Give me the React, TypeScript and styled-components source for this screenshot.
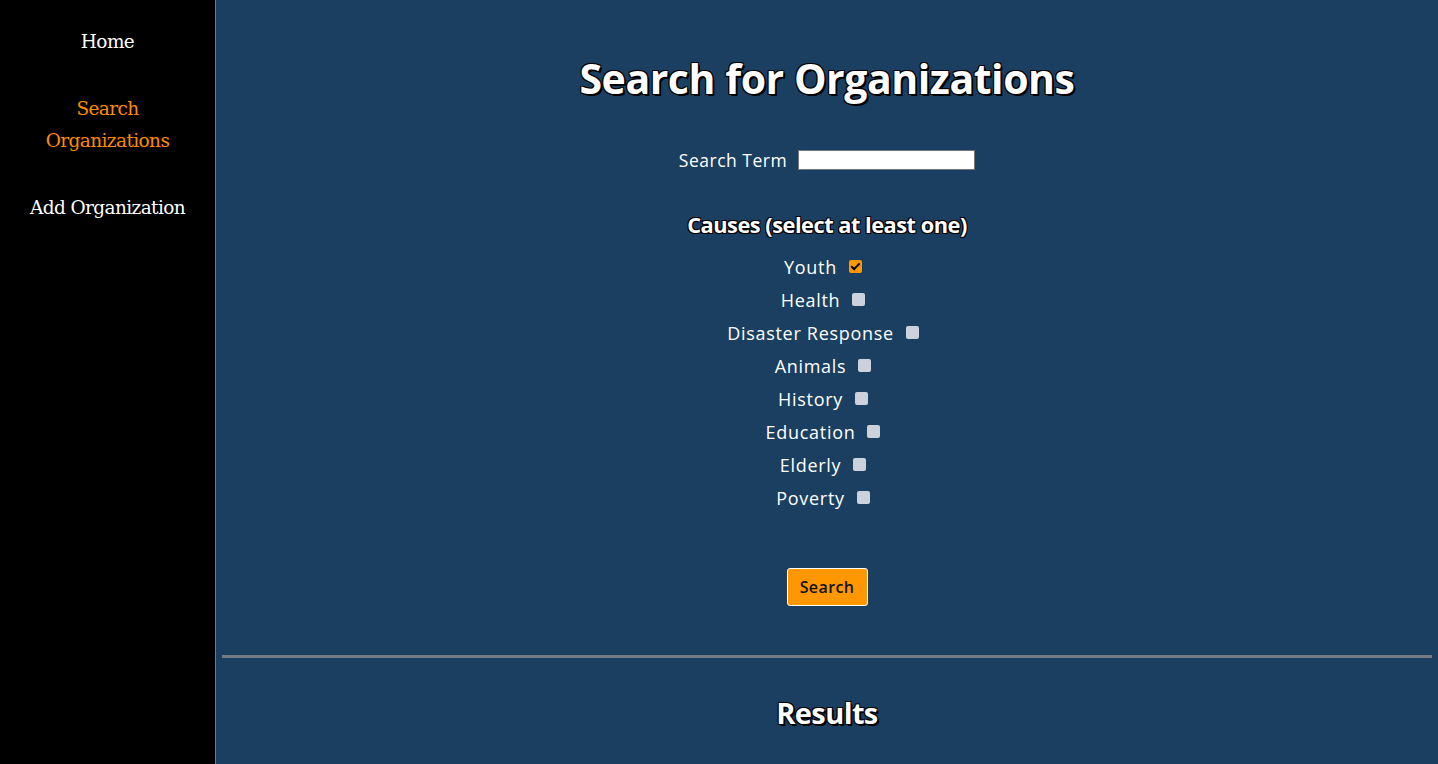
import React, { useState } from "react";
import styled, { createGlobalStyle } from "styled-components";

const Global = createGlobalStyle`
  html, body { margin: 0; padding: 0; background: #1b3f60; }
  #root { min-height: 100vh; }
`;

const Page = styled.div`
  display: flex;
  min-height: 764px;
`;

const Sidebar = styled.nav`
  width: 215px;
  flex: 0 0 215px;
  background: #000;
  border-right: 1px solid #6f7780;
  display: flex;
  flex-direction: column;
  align-items: center;
  padding-top: 26px;
  gap: 35px;
  font-family: "DejaVu Serif", "Liberation Serif", serif;
`;

const NavLink = styled.a<{ $active?: boolean }>`
  display: block;
  text-align: center;
  color: ${(p) => (p.$active ? "#ff8a00" : "#ffffff")};
  font-size: 18.5px;
  line-height: 32px;
  letter-spacing: -0.6px;
  text-decoration: none;
  padding: 0 20px;
`;

const Main = styled.main`
  flex: 1;
  background: #1b3f60;
  display: flex;
  flex-direction: column;
  align-items: center;
  padding: 54px 6px 0;
  font-family: "Open Sans", Lato, sans-serif;
  color: #fff;
`;

const Title = styled.h1`
  margin: 0;
  font-family: "Open Sans", Lato, sans-serif;
  font-weight: 700;
  font-size: 41px;
  line-height: 48px;
  letter-spacing: -0.45px;
  color: #fff;
  text-shadow: 2px 2px 0 #000, -1px -1px 0 #000, 1px -1px 0 #000, -1px 1px 0 #000,
    1px 1px 0 #000;
`;

const SearchRow = styled.div`
  margin-top: 46px;
  display: flex;
  align-items: center;
  gap: 11px;
  height: 24px;
  font-size: 17.5px;
  letter-spacing: 0.5px;
`;

const TextInput = styled.input`
  width: 177px;
  height: 20px;
  box-sizing: border-box;
  border: 1px solid #767676;
  background: #fff;
  padding: 0 3px;
  margin: 0;
`;

const Causes = styled.h2`
  margin: 39px 0 0;
  font-family: "Open Sans", Lato, sans-serif;
  font-weight: 700;
  font-size: 21.8px;
  line-height: 28px;
  letter-spacing: -0.5px;
  text-shadow: 1px 1px 0 #000, -1px -1px 0 #000, 1px -1px 0 #000, -1px 1px 0 #000;
`;

const CauseList = styled.div`
  margin-top: 11px;
  display: flex;
  flex-direction: column;
  align-items: center;
`;

const CauseRow = styled.label`
  display: flex;
  align-items: center;
  gap: 12px;
  height: 33px;
  font-size: 18px;
  letter-spacing: 0.7px;
  cursor: pointer;
`;

const Check = styled.input`
  appearance: none;
  -webkit-appearance: none;
  width: 13px;
  height: 13px;
  margin: 0 8px 0 0;
  border-radius: 2px;
  background: #cbd2dc;
  position: relative;
  cursor: pointer;
  &:checked {
    background: #ff9800;
  }
  &:checked::after {
    content: "";
    position: absolute;
    left: 4px;
    top: 1px;
    width: 3px;
    height: 7px;
    border: solid #000;
    border-width: 0 2px 2px 0;
    transform: rotate(45deg);
  }
`;

const SearchButton = styled.button`
  margin-top: 54px;
  width: 81px;
  height: 38px;
  box-sizing: border-box;
  background: #ff9800;
  border: 1px solid #fff;
  border-radius: 3px;
  font-family: "Open Sans", Lato, sans-serif;
  font-size: 16px;
  font-weight: 600;
  color: #111;
  letter-spacing: 0.4px;
  cursor: pointer;
`;

const Divider = styled.hr`
  align-self: stretch;
  margin: 49px 0 0;
  border: none;
  height: 3px;
  background: #777b80;
`;

const Results = styled.h2`
  margin: 37px 0 0;
  font-family: "Open Sans", Lato, sans-serif;
  font-weight: 700;
  font-size: 29px;
  line-height: 36px;
  letter-spacing: -0.6px;
  text-shadow: 2px 2px 0 #000, -1px -1px 0 #000, 1px -1px 0 #000, -1px 1px 0 #000;
`;

const causes = [
  "Youth",
  "Health",
  "Disaster Response",
  "Animals",
  "History",
  "Education",
  "Elderly",
  "Poverty",
];

export default function App() {
  const [checked, setChecked] = useState<Record<string, boolean>>({ Youth: true });
  return (
    <>
      <Global />
      <Page>
        <Sidebar>
          <NavLink href="#">Home</NavLink>
          <NavLink href="#" $active>
            Search
            <br />
            Organizations
          </NavLink>
          <NavLink href="#">Add Organization</NavLink>
        </Sidebar>
        <Main>
          <Title>Search for Organizations</Title>
          <SearchRow>
            <span>Search Term</span>
            <TextInput type="text" />
          </SearchRow>
          <Causes>Causes (select at least one)</Causes>
          <CauseList>
            {causes.map((c) => (
              <CauseRow key={c}>
                <span>{c}</span>
                <Check
                  type="checkbox"
                  checked={!!checked[c]}
                  onChange={() => setChecked((s) => ({ ...s, [c]: !s[c] }))}
                />
              </CauseRow>
            ))}
          </CauseList>
          <SearchButton>Search</SearchButton>
          <Divider />
          <Results>Results</Results>
        </Main>
      </Page>
    </>
  );
}
